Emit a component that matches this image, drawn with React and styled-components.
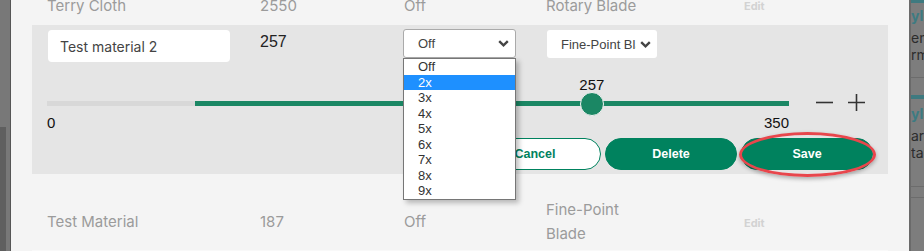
import React from "react";
import styled, { createGlobalStyle } from "styled-components";

const GREEN = "#00825e";
const SLIDER_GREEN = "#1b8764";

const GlobalStyle = createGlobalStyle`
  html, body {
    margin: 0;
    padding: 0;
    background: #777;
    overflow: hidden;
  }
  * {
    box-sizing: border-box;
  }
`;

const Page = styled.div`
  display: flex;
  width: 924px;
  height: 251px;
  overflow: hidden;
  font-family: Inter, "Liberation Sans", sans-serif;
`;

const LeftEdge = styled.div`
  width: 11px;
  display: flex;
  flex-direction: column;
  border-right: 1px solid #565656;
  background: #787878;
`;

const LeftEdgeLower = styled.div`
  margin-top: 127px;
  flex: 1;
  border-left: 6px solid #5f5f5f;
`;

const Panel = styled.div`
  width: 898px;
  background: #f4f4f4;
  padding: 0 21px;
  overflow: hidden;
`;

const List = styled.div`
  margin-top: -31px;
  display: flex;
  flex-direction: column;
`;

const Row = styled.div`
  display: grid;
  grid-template-columns: 213px 144px 142px 198px 1fr;
  align-items: center;
  padding: 24px 15px 4px;
  font-size: 15px;
  line-height: 24px;
  color: #9b9b9b;
  border-bottom: 1px solid ${(p) => (p.$last ? "#f9f9f9" : "#f4f4f4")};
`;

const Cell = styled.div`
  max-width: ${(p) => (p.$narrow ? "90px" : "none")};
`;

const EditLink = styled.span`
  font-size: 11px;
  font-weight: 700;
  color: #d2d2d2;
`;

const EditRow = styled.div`
  position: relative;
  margin-top: 2px;
  background: #e5e5e5;
  padding: 5px 15px 4px 16px;
`;

const FieldLine = styled.div`
  display: grid;
  grid-template-columns: 212px 143px 144px 1fr;
  align-items: start;
`;

const NameInput = styled.div`
  width: 182px;
  height: 32px;
  display: flex;
  align-items: center;
  padding: 0 12px;
  background: #fff;
  border-radius: 4px;
  font-size: 14px;
  color: #444;
`;

const ValueText = styled.div`
  margin-top: 2px;
  font-family: "Liberation Sans", Arial, sans-serif;
  font-size: 16px;
  line-height: 20px;
  color: #222;
`;

const SelectWrap = styled.div`
  position: relative;
  margin-top: ${(p) => (p.$bordered ? "-1px" : "0")};
`;

const SelectBox = styled.div`
  display: flex;
  align-items: center;
  justify-content: space-between;
  width: ${(p) => p.$width}px;
  height: ${(p) => (p.$bordered ? 29 : 28)}px;
  padding: 0 6px 0 14px;
  background: #fff;
  border: ${(p) => (p.$bordered ? "1px solid #aaa" : "none")};
  border-radius: 3px;
  font-family: "Liberation Sans", Arial, sans-serif;
  font-size: 13px;
  color: #444;
`;

const SelectLabel = styled.span`
  width: ${(p) => p.$clip}px;
  overflow: hidden;
  white-space: nowrap;
`;

const DropList = styled.ul`
  position: absolute;
  top: 100%;
  left: 0;
  z-index: 5;
  width: 113px;
  margin: 0;
  padding: 0;
  list-style: none;
  background: #fff;
  border: 1px solid #767676;
  box-shadow: 3px 3px 5px rgba(0, 0, 0, 0.25);
`;

const DropItem = styled.li`
  height: 15.5px;
  line-height: 15.5px;
  padding-left: 14px;
  font-family: "Liberation Sans", Arial, sans-serif;
  font-size: 13px;
  color: ${(p) => (p.$active ? "#fff" : "#333")};
  background: ${(p) => (p.$active ? "#1e90ff" : "transparent")};
`;

const SliderLine = styled.div`
  display: flex;
  align-items: flex-start;
  gap: 26px;
  margin-top: 13px;
  margin-left: -1px;
`;

const SliderArea = styled.div`
  width: 742px;
  padding-top: 26px;
`;

const Track = styled.div`
  position: relative;
  height: 5px;
  background: #d8d8d8;
`;

const Fill = styled.div`
  position: absolute;
  top: 0;
  bottom: 0;
  right: 0;
  background: ${SLIDER_GREEN};
`;

const Thumb = styled.div`
  position: absolute;
  top: 50%;
  width: 24px;
  height: 24px;
  transform: translate(-50%, -50%);
  border-radius: 50%;
  background: ${SLIDER_GREEN};
  border: 1px solid #f2f2f2;
`;

const ThumbLabel = styled.div`
  position: absolute;
  bottom: 13px;
  transform: translateX(-50%);
  font-family: "Liberation Sans", Arial, sans-serif;
  font-size: 15px;
  line-height: 16px;
  color: #111;
`;

const RangeLabels = styled.div`
  display: flex;
  justify-content: space-between;
  margin-top: 9px;
  font-family: "Liberation Sans", Arial, sans-serif;
  font-size: 15px;
  line-height: 16px;
  color: #111;
`;

const Steppers = styled.div`
  display: flex;
  gap: 13px;
  padding-top: 18px;
  color: #333;
`;

const ButtonRow = styled.div`
  display: flex;
  justify-content: flex-end;
  gap: 4px;
  margin-top: 7px;
`;

const PillButton = styled.button`
  position: relative;
  width: 132px;
  height: 32px;
  border-radius: 16px;
  border: 1px solid ${GREEN};
  background: ${(p) => (p.$outline ? "#fff" : GREEN)};
  color: ${(p) => (p.$outline ? GREEN : "#fff")};
  font-family: "Liberation Sans", Arial, sans-serif;
  font-size: 12.5px;
  font-weight: 700;
  padding: 0;
`;

const Highlight = styled.span`
  position: absolute;
  top: -7px;
  bottom: -8px;
  left: -3px;
  right: -4px;
  border: 3px solid #e8464c;
  border-radius: 50%;
  box-shadow: 0 2px 4px rgba(0, 0, 0, 0.3);
  pointer-events: none;
`;

const Backdrop = styled.div`
  width: 15px;
  background: #7d7d7d;
  border-left: 2px solid #6a6a6a;
  display: flex;
  flex-direction: column;
  overflow: hidden;
  font-size: 14px;
  color: #2c2c2c;
  white-space: nowrap;
`;

const BackdropBar = styled.div`
  height: ${(p) => p.$h}px;
  margin-top: ${(p) => p.$mt}px;
  background: #3e7a80;
  flex-shrink: 0;
`;

const BackdropTitle = styled.div`
  margin-top: ${(p) => p.$mt}px;
  line-height: 18px;
  font-weight: 700;
  color: #3c7b82;
`;

const BackdropText = styled.div`
  margin-top: ${(p) => p.$mt || 0}px;
  line-height: 17px;
`;

const BackdropRule = styled.div`
  margin-top: ${(p) => p.$mt}px;
  height: 1px;
  background: #6c6c6c;
  flex-shrink: 0;
`;

const Chevron = () => (
  <svg width="11" height="7" viewBox="0 0 11 7">
    <path d="M1.2 1.2 L5.5 5.3 L9.8 1.2" fill="none" stroke="#444" strokeWidth="2.4" />
  </svg>
);

const Minus = () => (
  <svg width="19" height="19" viewBox="0 0 19 19">
    <path d="M1 9.5 H18" stroke="#333" strokeWidth="1.6" />
  </svg>
);

const Plus = () => (
  <svg width="19" height="19" viewBox="0 0 19 19">
    <path d="M1 9.5 H18 M9.5 1 V18" stroke="#333" strokeWidth="1.6" />
  </svg>
);

const options = ["Off", "2x", "3x", "4x", "5x", "6x", "7x", "8x", "9x"];

const MIN = 0;
const MAX = 350;
const value = 257;
const fillStart = 20;

const App = () => {
  const pct = ((value - MIN) / (MAX - MIN)) * 100;
  return (
    <>
      <GlobalStyle />
      <Page>
        <LeftEdge>
          <LeftEdgeLower />
        </LeftEdge>
        <Panel>
          <List>
            <Row>
              <Cell>Terry Cloth</Cell>
              <Cell>2550</Cell>
              <Cell>Off</Cell>
              <Cell>Rotary Blade</Cell>
              <Cell>
                <EditLink>Edit</EditLink>
              </Cell>
            </Row>

            <EditRow>
              <FieldLine>
                <NameInput>Test material 2</NameInput>
                <ValueText>257</ValueText>
                <SelectWrap $bordered>
                  <SelectBox $bordered $width={113}>
                    <SelectLabel $clip={60}>Off</SelectLabel>
                    <Chevron />
                  </SelectBox>
                  <DropList>
                    {options.map((o) => (
                      <DropItem key={o} $active={o === "2x"}>
                        {o}
                      </DropItem>
                    ))}
                  </DropList>
                </SelectWrap>
                <SelectWrap>
                  <SelectBox $width={110}>
                    <SelectLabel $clip={75}>Fine-Point Blade</SelectLabel>
                    <Chevron />
                  </SelectBox>
                </SelectWrap>
              </FieldLine>

              <SliderLine>
                <SliderArea>
                  <Track>
                    <Fill style={{ left: `${fillStart}%` }} />
                    <ThumbLabel style={{ left: `${pct}%` }}>{value}</ThumbLabel>
                    <Thumb style={{ left: `${pct}%` }} />
                  </Track>
                  <RangeLabels>
                    <span>{MIN}</span>
                    <span>{MAX}</span>
                  </RangeLabels>
                </SliderArea>
                <Steppers>
                  <Minus />
                  <Plus />
                </Steppers>
              </SliderLine>

              <ButtonRow>
                <PillButton $outline>Cancel</PillButton>
                <PillButton>Delete</PillButton>
                <PillButton>
                  Save
                  <Highlight />
                </PillButton>
              </ButtonRow>
            </EditRow>

            <Row $last>
              <Cell>Test Material</Cell>
              <Cell>187</Cell>
              <Cell>Off</Cell>
              <Cell $narrow>Fine-Point Blade</Cell>
              <Cell>
                <EditLink>Edit</EditLink>
              </Cell>
            </Row>
          </List>
        </Panel>
        <Backdrop>
          <BackdropBar $h={3} $mt={0} />
          <BackdropTitle $mt={4}>yl</BackdropTitle>
          <BackdropText $mt={4}>em</BackdropText>
          <BackdropText>rm</BackdropText>
          <BackdropRule $mt={14} />
          <BackdropBar $h={4} $mt={17} />
          <BackdropTitle $mt={6}>yl</BackdropTitle>
          <BackdropText $mt={4}>ar</BackdropText>
          <BackdropText>tal</BackdropText>
          <BackdropRule $mt={25} />
          <BackdropRule $mt={10} />
        </Backdrop>
      </Page>
    </>
  );
};

export default App;
